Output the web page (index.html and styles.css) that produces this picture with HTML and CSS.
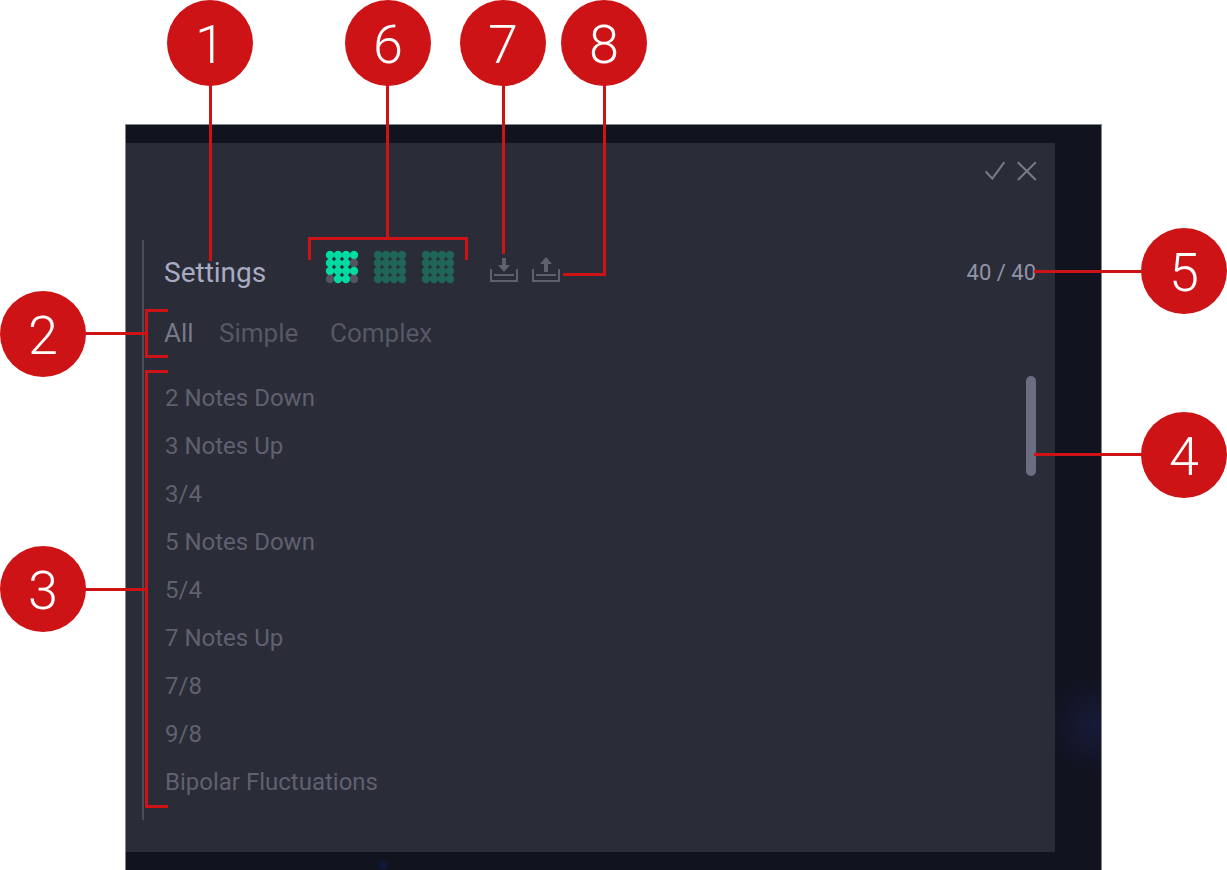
FILE: index.html
```
<!DOCTYPE html>
<html lang="en">
<head>
  <meta charset="UTF-8">
  <meta name="viewport" content="width=device-width, initial-scale=1.0">
  <title>Settings browser</title>
  <link rel="stylesheet" href="styles.css">
</head>
<body>

  <main class="stage">
    <section class="dialog">
      <div class="dialog-bar">
        <button type="button" aria-label="Apply">
          <svg width="20" height="20" viewBox="0 0 20 20"><path d="M0.7 10.5L7.3 17.7L19.3 1.2"/></svg>
        </button>
        <button type="button" aria-label="Close">
          <svg width="20" height="20" viewBox="0 0 20 20"><path d="M0.8 1.3L18.8 19M18.8 1.3L0.8 19"/></svg>
        </button>
      </div>

      <div class="panel">
        <header class="panel-header">
          <h1>Settings</h1>
          <div class="patterns" id="patterns"></div>
          <div class="transfer">
            <button type="button" aria-label="Import">
              <svg width="28" height="28" viewBox="0 0 28 28">
                <path class="tray" d="M1 13V25H27V13M4 19H24"/>
                <path class="arrow" d="M12 2h4v7h4l-6 7l-6-7h4z"/>
              </svg>
            </button>
            <button type="button" aria-label="Export">
              <svg width="28" height="28" viewBox="0 0 28 28">
                <path class="tray" d="M1 13V25H27V13M4 19H24"/>
                <path class="arrow" d="M12 16h4V8h4L14 1L8 8h4z"/>
              </svg>
            </button>
          </div>
          <span class="count">40 / 40</span>
        </header>

        <nav class="tabs">
          <button type="button" class="active">All</button>
          <button type="button">Simple</button>
          <button type="button">Complex</button>
        </nav>

        <div class="browser">
          <ul class="presets">
            <li><button type="button">2 Notes Down</button></li>
            <li><button type="button">3 Notes Up</button></li>
            <li><button type="button">3/4</button></li>
            <li><button type="button">5 Notes Down</button></li>
            <li><button type="button">5/4</button></li>
            <li><button type="button">7 Notes Up</button></li>
            <li><button type="button">7/8</button></li>
            <li><button type="button">9/8</button></li>
            <li><button type="button">Bipolar Fluctuations</button></li>
          </ul>
          <div class="scroll-thumb"></div>
        </div>
      </div>
    </section>
  </main>

  <!-- numbered callouts over the dialog -->
  <div class="callouts">
    <i class="line line-1"></i>
    <i class="line line-2"></i>
    <i class="bracket bracket-2"></i>
    <i class="line line-3"></i>
    <i class="bracket bracket-3"></i>
    <i class="line line-4"></i>
    <i class="line line-5"></i>
    <i class="line line-6"></i>
    <i class="bracket bracket-6"></i>
    <i class="line line-7"></i>
    <i class="bracket elbow-8"></i>
    <span class="badge badge-1">1</span>
    <span class="badge badge-2">2</span>
    <span class="badge badge-3">3</span>
    <span class="badge badge-4">4</span>
    <span class="badge badge-5">5</span>
    <span class="badge badge-6">6</span>
    <span class="badge badge-7">7</span>
    <span class="badge badge-8">8</span>
  </div>

  <script>
    const patterns = [
      { name: "Pattern 1", dots: "1111111011110110", active: true },
      { name: "Pattern 2", dots: "1111111111111111" },
      { name: "Pattern 3", dots: "1111111111111111" }
    ];
    const container = document.getElementById("patterns");

    patterns.forEach(pattern => {
      const button = document.createElement("button");
      button.type = "button";
      button.className = pattern.active ? "pattern active" : "pattern";
      button.setAttribute("aria-label", pattern.name);
      const circles = [...pattern.dots].map((dot, i) =>
        `<circle class="${dot === "1" ? "on" : "off"}" cx="${4 + (i % 4) * 8}" cy="${5 + Math.floor(i / 4) * 8}" r="4.2"/>`
      ).join("");
      button.innerHTML = `<svg width="34" height="34" viewBox="0 0 34 34">${circles}</svg>`;
      container.appendChild(button);
    });
  </script>

</body>
</html>
```
FILE: styles.css
```
* {
  box-sizing: border-box;
}
body {
  margin: 0;
  padding: 124px 125px 0;
  position: relative;
  background: #fff;
  font-family: Roboto, "Liberation Sans", sans-serif;
}
button {
  display: block;
  padding: 0;
  border: 0;
  background: none;
  color: inherit;
  font: inherit;
  text-align: left;
  cursor: pointer;
}
svg {
  display: block;
  overflow: visible;
}

.stage {
  padding: 18px 46px 18px 0;
  border: 1px solid #85868e;
  border-bottom: 0;
  background:
    radial-gradient(circle at 970px 600px, #171a38 0, transparent 50px),
    radial-gradient(circle at 257px 740px, #0d1b48 0, transparent 6px),
    #11131f;
}
.dialog {
  padding-bottom: 32px;
  background: #2a2c37;
}
.dialog-bar {
  display: flex;
  justify-content: flex-end;
  gap: 12px;
  padding: 18px 18px 59px;
}
.dialog-bar path {
  fill: none;
  stroke: #787a88;
  stroke-width: 2;
}

.panel {
  margin: 0 19px 0 16px;
  padding: 0 0 14px 20px;
  border-left: 2px solid #4b4d59;
}
.panel-header {
  display: flex;
  align-items: flex-end;
  height: 66px;
  padding-bottom: 22px;
  line-height: 22px;
}
h1 {
  width: 162px;
  margin: 0;
  color: #a9abc3;
  font-size: 28px;
  font-weight: 400;
}
.patterns {
  display: flex;
  gap: 14px;
}
.pattern .on {
  fill: #1f6659;
}
.pattern.active .on {
  fill: #00dba2;
}
.pattern .off {
  fill: #525461;
}
.transfer {
  display: flex;
  gap: 14px;
  margin-left: 34px;
}
.tray {
  fill: none;
  stroke: #5f616f;
  stroke-width: 2;
}
.arrow {
  fill: #5f616f;
}
.count {
  margin-left: auto;
  color: #9193a8;
  font-size: 22px;
}

.tabs {
  display: grid;
  grid-template-columns: 55px 111px auto;
  margin-bottom: 14px;
  color: #565866;
  font-size: 26px;
  line-height: 54px;
}
.tabs .active {
  color: #777988;
}

.browser {
  display: flex;
  justify-content: space-between;
}
.presets {
  margin: 0;
  padding: 0 0 0 1px;
  list-style: none;
  color: #5f6170;
  font-size: 24px;
  line-height: 48px;
}
.scroll-thumb {
  width: 10px;
  height: 100px;
  margin-top: 2px;
  border-radius: 5px;
  background: #6b6d80;
}

/* callouts */
.badge {
  position: absolute;
  width: 86px;
  height: 86px;
  border-radius: 50%;
  background: #cd1316;
  color: #fff;
  font-size: 54px;
  font-weight: 300;
  line-height: 90px;
  text-align: center;
}
.badge-1 { left: 167px; top: 0; }
.badge-6 { left: 345px; top: 0; }
.badge-7 { left: 460px; top: 0; }
.badge-8 { left: 561px; top: 0; }
.badge-2 { left: 0; top: 291px; }
.badge-3 { left: 0; top: 546px; }
.badge-5 { right: 0; top: 228px; }
.badge-4 { right: 0; top: 412px; }

.line {
  position: absolute;
  background: #cd1316;
}
.line-1, .line-6, .line-7 {
  top: 80px;
  width: 3px;
}
.line-1 { left: 209px; height: 181px; }
.line-6 { left: 386px; height: 158px; }
.line-7 { left: 502px; height: 174px; }
.line-2, .line-3 {
  left: 80px;
  width: 66px;
  height: 3px;
}
.line-2 { top: 332px; }
.line-3 { top: 588px; }
.line-4, .line-5 {
  right: 80px;
  width: 113px;
  height: 3px;
}
.line-4 { top: 453px; }
.line-5 { top: 270px; }

.bracket {
  position: absolute;
  border: 3px solid #cd1316;
}
.bracket-2, .bracket-3 {
  left: 145px;
  width: 23px;
  border-right: 0;
}
.bracket-2 { top: 309px; height: 49px; }
.bracket-3 { top: 370px; height: 438px; }
.bracket-6 {
  left: 308px;
  top: 237px;
  width: 160px;
  height: 23px;
  border-bottom: 0;
}
.elbow-8 {
  left: 563px;
  top: 80px;
  width: 43px;
  height: 196px;
  border-top: 0;
  border-left: 0;
}
```
